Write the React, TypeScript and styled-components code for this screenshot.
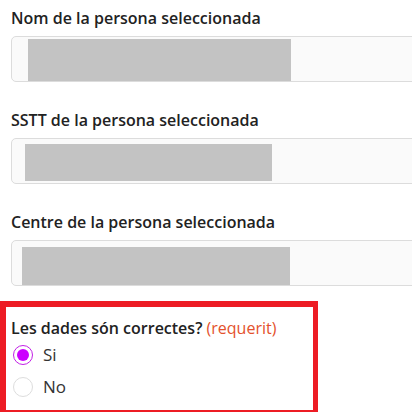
import styled, { createGlobalStyle } from "styled-components";

const GlobalStyle = createGlobalStyle`
  html, body {
    margin: 0;
    padding: 0;
    background: #ffffff;
    overflow: hidden;
  }
  body {
    font-family: "Open Sans", "Noto Sans", sans-serif;
    color: #222222;
  }
`;

const Page = styled.div`
  width: 412px;
  height: 412px;
  overflow: hidden;
  padding-top: 6px;
  box-sizing: border-box;
`;

const Field = styled.div`
  padding-left: 11px;
  margin-bottom: 26px;
`;

const Label = styled.div`
  font-size: 16px;
  font-weight: 600;
  line-height: 24px;
  color: #222222;
  white-space: nowrap;
`;

const Required = styled.span`
  font-weight: 400;
  color: #e4512c;
`;

const Input = styled.div`
  margin-top: 6px;
  width: 440px;
  height: 46px;
  box-sizing: border-box;
  border: 1px solid #dcdcdc;
  border-radius: 5px;
  background: #fafafa;
  display: flex;
  align-items: flex-start;
`;

const Redacted = styled.div<{ $left: number; $top: number; $width: number; $height: number }>`
  margin-left: ${(p) => p.$left}px;
  margin-top: ${(p) => p.$top}px;
  width: ${(p) => p.$width}px;
  height: ${(p) => p.$height}px;
  background: #c3c3c3;
`;

const Highlight = styled.div`
  margin-top: -11px;
  width: 318px;
  height: 114px;
  box-sizing: border-box;
  border: 5px solid #ed1c24;
  border-left-width: 6px;
  border-top-width: 6px;
  padding: 9px 0 0 5px;
`;

const Options = styled.div`
  margin-top: 5px;
  display: flex;
  flex-direction: column;
  gap: 12px;
`;

const Option = styled.label`
  display: flex;
  align-items: center;
  gap: 10px;
  margin-left: 2px;
  font-size: 17px;
  line-height: 20px;
  color: #333333;
`;

const Radio = styled.span<{ $checked?: boolean }>`
  width: 20px;
  height: 20px;
  box-sizing: border-box;
  border-radius: 50%;
  border: 1.5px solid ${(p) => (p.$checked ? "#c21fe6" : "#dddddd")};
  background: #ffffff;
  display: flex;
  align-items: center;
  justify-content: center;
  &::after {
    content: "";
    display: ${(p) => (p.$checked ? "block" : "none")};
    width: 12px;
    height: 12px;
    border-radius: 50%;
    background: #cc00ff;
  }
`;

const fields = [
  { label: "Nom de la persona seleccionada", left: 16, top: 2, width: 263, height: 42 },
  { label: "SSTT de la persona seleccionada", left: 13, top: 5, width: 247, height: 37 },
  { label: "Centre de la persona seleccionada", left: 10, top: 6, width: 268, height: 38 },
];

export default function App() {
  return (
    <Page>
      <GlobalStyle />
      {fields.map((f) => (
        <Field key={f.label}>
          <Label>{f.label}</Label>
          <Input>
            <Redacted $left={f.left} $top={f.top} $width={f.width} $height={f.height} />
          </Input>
        </Field>
      ))}
      <Highlight>
        <Label>
          Les dades són correctes? <Required>(requerit)</Required>
        </Label>
        <Options>
          <Option>
            <Radio $checked />
            Si
          </Option>
          <Option>
            <Radio />
            No
          </Option>
        </Options>
      </Highlight>
    </Page>
  );
}
